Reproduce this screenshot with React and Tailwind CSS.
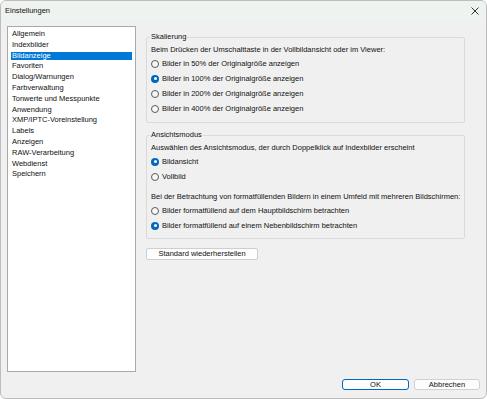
import React from "react";

const font = { fontFamily: '"Liberation Sans", Arial, sans-serif' };

function Radio({ checked, label }) {
  return (
    <div className="h-[15px] flex items-center">
      {checked ? (
        <span className="w-[8px] h-[8px] rounded-full bg-[#0067c0] flex items-center justify-center shrink-0">
          <span className="w-[3px] h-[3px] rounded-full bg-white" />
        </span>
      ) : (
        <span className="w-[8px] h-[8px] rounded-full border border-[#5a5a5a] bg-[#f7f7f7] shrink-0" />
      )}
      <span className="ml-[3px] text-[7.5px] text-[#111]">{label}</span>
    </div>
  );
}

function Group({ title, children, className = "" }) {
  return (
    <div className={"relative border border-[#dadada] rounded-[2px] pl-[4px] " + className}>
      <span className="absolute left-[3px] top-[-7px] px-[1px] h-[12px] leading-[12px] bg-[#f0f0f0] text-[7.5px] text-[#111]">
        {title}
      </span>
      {children}
    </div>
  );
}

const items = [
  "Allgemein",
  "Indexbilder",
  "Bildanzeige",
  "Favoriten",
  "Dialog/Warnungen",
  "Farbverwaltung",
  "Tonwerte und Messpunkte",
  "Anwendung",
  "XMP/IPTC-Voreinstellung",
  "Labels",
  "Anzeigen",
  "RAW-Verarbeitung",
  "Webdienst",
  "Speichern",
];

export default function App() {
  return (
    <div
      style={font}
      className="w-[487px] h-[399px] bg-[#f0f0f0] border border-[#bdbdbd] rounded-[6px] overflow-hidden flex flex-col"
    >
      <div className="h-[20px] shrink-0 bg-[#eef3f0] flex items-center justify-between pl-[4px] pr-[7px]">
        <span className="text-[7.5px] text-[#111]">Einstellungen</span>
        <svg width="8" height="8" viewBox="0 0 8 8">
          <path d="M0.5 0.5 L7.5 7.5 M7.5 0.5 L0.5 7.5" stroke="#333" strokeWidth="1" />
        </svg>
      </div>
      <div className="flex items-start pl-[6px] pt-[5px]">
        <div className="w-[129px] h-[346px] bg-white border border-[#a9a9a9] pt-[1.6px] px-[3px]">
          {items.map((it) => (
            <div key={it} className="h-[10.8px] flex items-center">
              {it === "Bildanzeige" ? (
                <span className="block w-full h-[8px] leading-[8px] bg-[#0078d7] text-white text-[7.5px] pl-[1px]">
                  {it}
                </span>
              ) : (
                <span className="block pl-[1px] text-[7.5px] text-[#111] leading-[8px]">{it}</span>
              )}
            </div>
          ))}
        </div>
        <div className="ml-[10px] w-[319px] pt-[11px] flex flex-col">
          <Group title="Skalierung" className="pt-[5px] pb-[6px]">
            <div className="h-[13px] flex items-center text-[7.5px] text-[#111]">
              Beim Drücken der Umschalttaste in der Vollbildansicht oder im Viewer:
            </div>
            <Radio label="Bilder in 50% der Originalgröße anzeigen" />
            <Radio checked label="Bilder in 100% der Originalgröße anzeigen" />
            <Radio label="Bilder in 200% der Originalgröße anzeigen" />
            <Radio label="Bilder in 400% der Originalgröße anzeigen" />
          </Group>
          <Group title="Ansichtsmodus" className="mt-[12px] pt-[5px] pb-[5px]">
            <div className="h-[13px] flex items-center text-[7.5px] text-[#111]">
              Auswählen des Ansichtsmodus, der durch Doppelklick auf Indexbilder erscheint
            </div>
            <Radio checked label="Bildansicht" />
            <Radio label="Vollbild" />
            <div className="mt-[6px] h-[13px] flex items-center text-[7.5px] text-[#111]">
              Bei der Betrachtung von formatfüllenden Bildern in einem Umfeld mit mehreren Bildschirmen:
            </div>
            <Radio label="Bilder formatfüllend auf dem Hauptbildschirm betrachten" />
            <Radio checked label="Bilder formatfüllend auf einem Nebenbildschirm betrachten" />
          </Group>
          <div className="mt-[9px]">
            <button className="w-[112px] h-[12px] bg-[#fdfdfd] border border-[#cfcfcf] rounded-[2px] text-[7.5px] text-[#111] leading-[10px] flex items-center justify-center">
              Standard wiederherstellen
            </button>
          </div>
        </div>
      </div>
      <div className="flex justify-end gap-[5px] pr-[6px] mt-[7px]">
        <button className="w-[67px] h-[11px] bg-[#fdfdfd] border border-[#0067c0] rounded-[3px] text-[7.5px] text-[#111] flex items-center justify-center">
          OK
        </button>
        <button className="w-[66px] h-[11px] bg-[#fdfdfd] border border-[#d0d0d0] rounded-[3px] text-[7.5px] text-[#111] flex items-center justify-center">
          Abbrechen
        </button>
      </div>
    </div>
  );
}
